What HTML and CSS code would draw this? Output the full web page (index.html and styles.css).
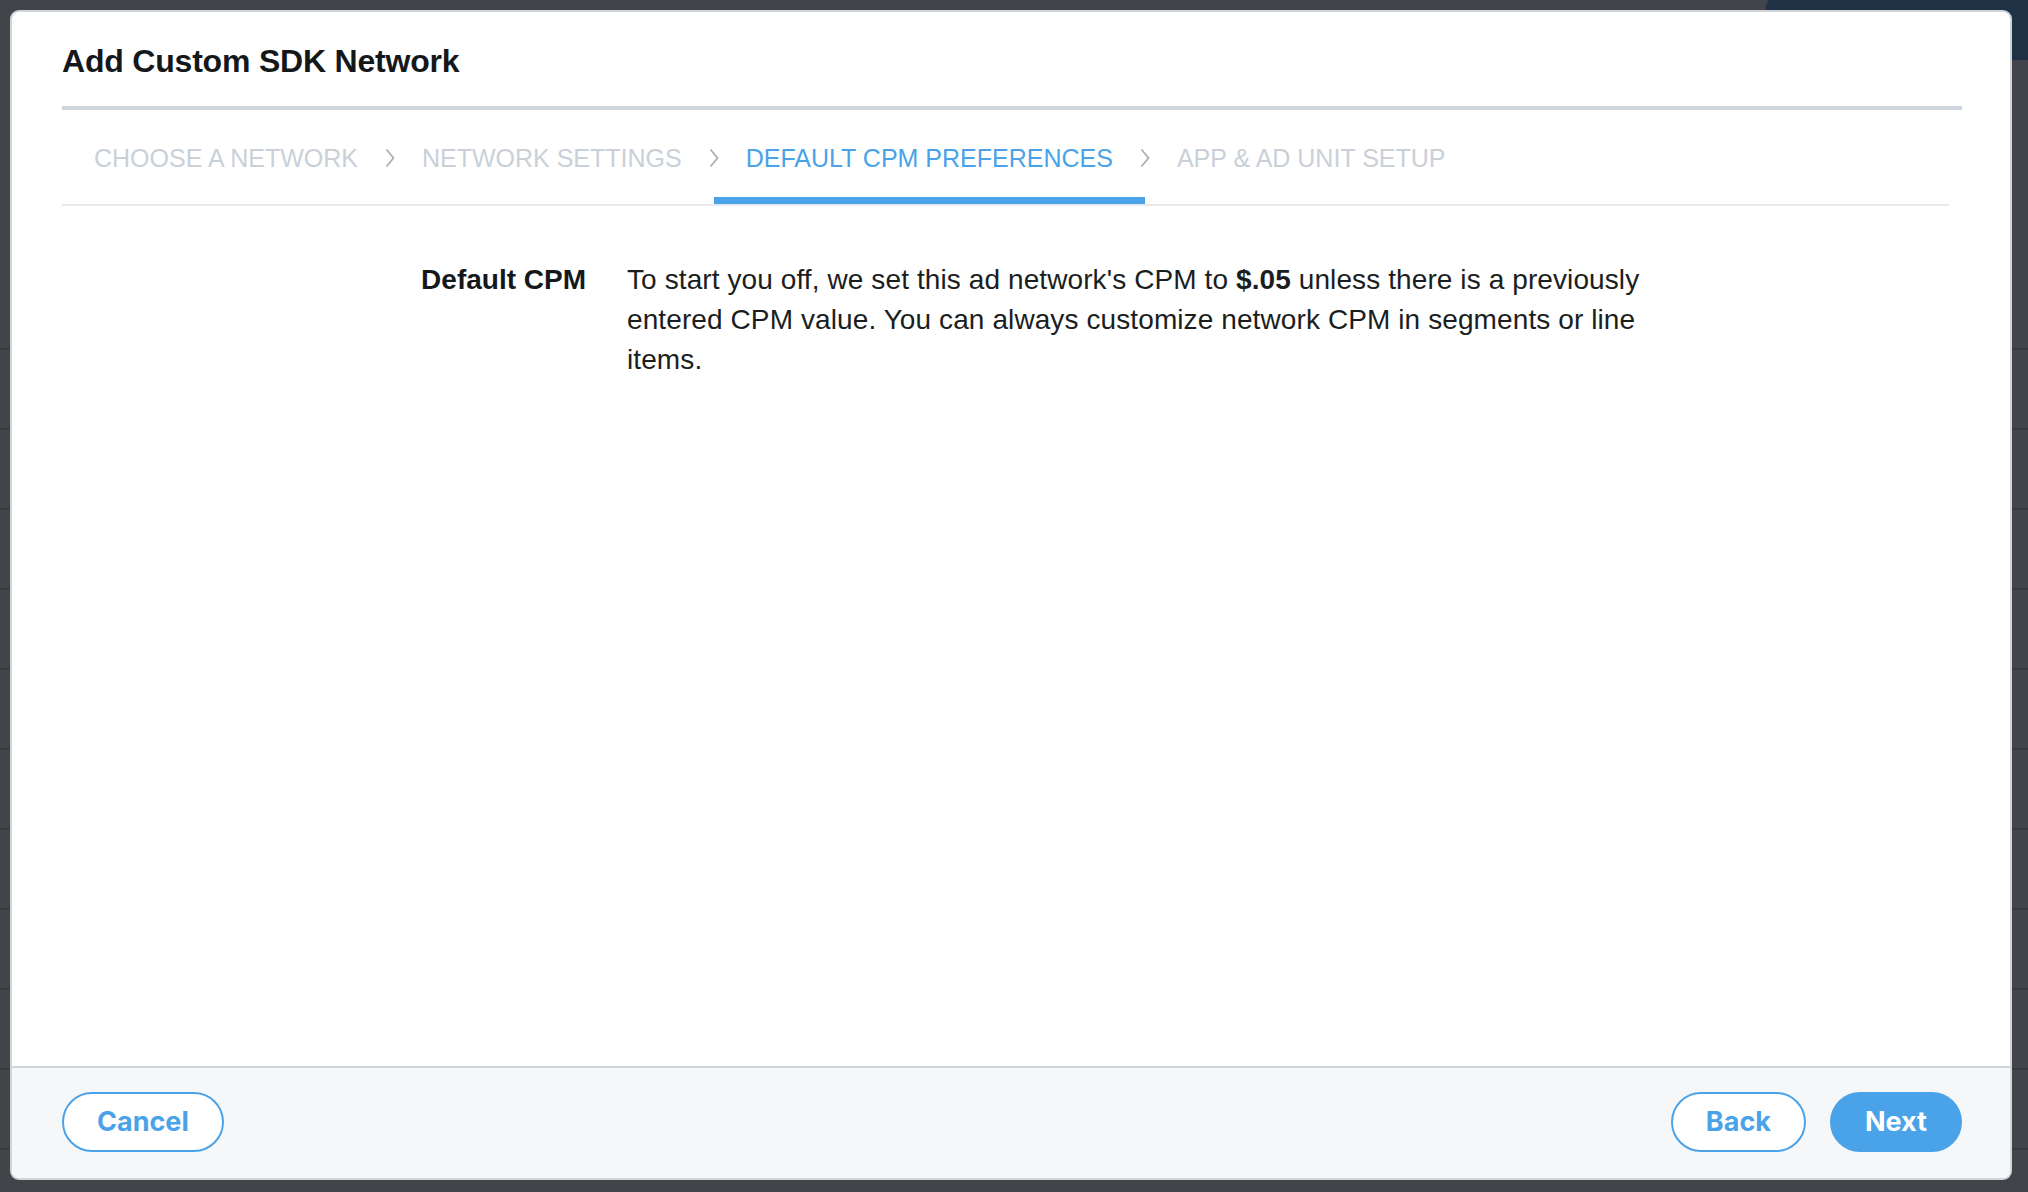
FILE: index.html
```html
<!DOCTYPE html>
<html lang="en">
<head>
<meta charset="utf-8">
<title>Add Custom SDK Network</title>
<link rel="stylesheet" href="styles.css">
</head>
<body>
<div class="backdrop">
  <div class="bg-blob"></div>
  <div class="modal">
    <header class="modal-header">
      <h1 class="modal-title">Add Custom SDK Network</h1>
    </header>
    <nav class="steps">
      <div class="step">CHOOSE A NETWORK</div>
      <div class="sep"><svg width="10" height="20" viewBox="0 0 10 20"><polyline points="1.5,1.5 8.5,10 1.5,18.5" fill="none" stroke="#a9b0b8" stroke-width="1.8"/></svg></div>
      <div class="step">NETWORK SETTINGS</div>
      <div class="sep"><svg width="10" height="20" viewBox="0 0 10 20"><polyline points="1.5,1.5 8.5,10 1.5,18.5" fill="none" stroke="#a9b0b8" stroke-width="1.8"/></svg></div>
      <div class="step active">DEFAULT CPM PREFERENCES</div>
      <div class="sep"><svg width="10" height="20" viewBox="0 0 10 20"><polyline points="1.5,1.5 8.5,10 1.5,18.5" fill="none" stroke="#a9b0b8" stroke-width="1.8"/></svg></div>
      <div class="step">APP &amp; AD UNIT SETUP</div>
    </nav>
    <main class="modal-body">
      <div class="field">
        <div class="field-label">Default CPM</div>
        <p class="field-text">To start you off, we set this ad network's CPM to <strong>$.05</strong> unless there is a previously entered CPM value. You can always customize network CPM in segments or line items.</p>
      </div>
    </main>
    <footer class="modal-footer">
      <button class="btn btn-outline">Cancel</button>
      <div class="footer-right">
        <button class="btn btn-outline">Back</button>
        <button class="btn btn-primary">Next</button>
      </div>
    </footer>
  </div>
</div>
</body>
</html>
```
FILE: styles.css
```css
* { box-sizing: border-box; }

html, body {
  margin: 0;
  padding: 0;
  width: 2028px;
  height: 1192px;
  overflow: hidden;
}

body {
  font-family: "Liberation Sans", Arial, Helvetica, sans-serif;
  background: #434449;
}

.backdrop {
  position: relative;
  width: 2028px;
  height: 1192px;
  padding: 12px 18px 14px 12px;
  background:
    repeating-linear-gradient(to bottom, transparent 0, transparent 78px, #393a3e 78px, #393a3e 80px) 0 270px / 100% 100% no-repeat,
    #434449;
}

.bg-blob {
  position: absolute;
  top: -60px;
  right: -40px;
  width: 300px;
  height: 120px;
  border-radius: 0 0 0 60px;
  background: #1f3245;
  transform: skewX(-20deg);
}

.modal {
  position: relative;
  display: flex;
  flex-direction: column;
  width: 1998px;
  height: 1166px;
  background: #ffffff;
  border-radius: 7px;
  box-shadow: 0 0 0 2px #cfd4d9;
  overflow: hidden;
}

.modal-header {
  padding: 29px 48px 0 50px;
}

.modal-title {
  margin: 0;
  height: 69px;
  border-bottom: 4px solid #cfd5dc;
  font-size: 32px;
  line-height: 40px;
  font-weight: 700;
  color: #15181b;
  letter-spacing: -0.2px;
}

.steps {
  display: flex;
  align-items: flex-start;
  margin: 0 61px 0 50px;
  border-bottom: 2px solid #e6eaee;
}

.step {
  padding: 33px 32px 24px;
  border-bottom: 7px solid transparent;
  font-size: 25px;
  line-height: 30px;
  color: #c9d0d8;
  white-space: nowrap;
}

.step.active {
  color: #4aa3e9;
  border-bottom-color: #4aa3e9;
}

.sep {
  width: 0;
  height: 94px;
  display: flex;
  align-items: center;
  justify-content: center;
  padding-top: 2px;
}

.sep svg {
  flex: none;
}

.modal-body {
  flex: 1;
  padding: 54px 48px 0 50px;
}

.field {
  display: grid;
  grid-template-columns: 524px 1060px;
  column-gap: 41px;
}

.field-label {
  text-align: right;
  font-weight: 700;
  font-size: 28px;
  line-height: 40px;
  color: #15181b;
}

.field-text {
  margin: 0;
  font-size: 28px;
  line-height: 40px;
  letter-spacing: 0.1px;
  color: #1b1e21;
}

.field-text strong {
  font-weight: 700;
}

.modal-footer {
  display: flex;
  justify-content: space-between;
  align-items: center;
  padding: 24px 48px 26px 50px;
  background: #f5f7f9;
  border-top: 2px solid #cfd5dc;
}

.footer-right {
  display: flex;
  gap: 24px;
}

.btn {
  height: 60px;
  padding: 0 33px;
  border-radius: 30px;
  border: 2px solid #4aa3e9;
  font-family: "Inter", "Liberation Sans", Arial, sans-serif;
  font-weight: 700;
  font-size: 27px;
  line-height: 56px;
  cursor: pointer;
}

.btn-outline {
  background: #ffffff;
  color: #4aa3e9;
}

.btn-primary {
  background: #4aa3e9;
  color: #ffffff;
}
```
